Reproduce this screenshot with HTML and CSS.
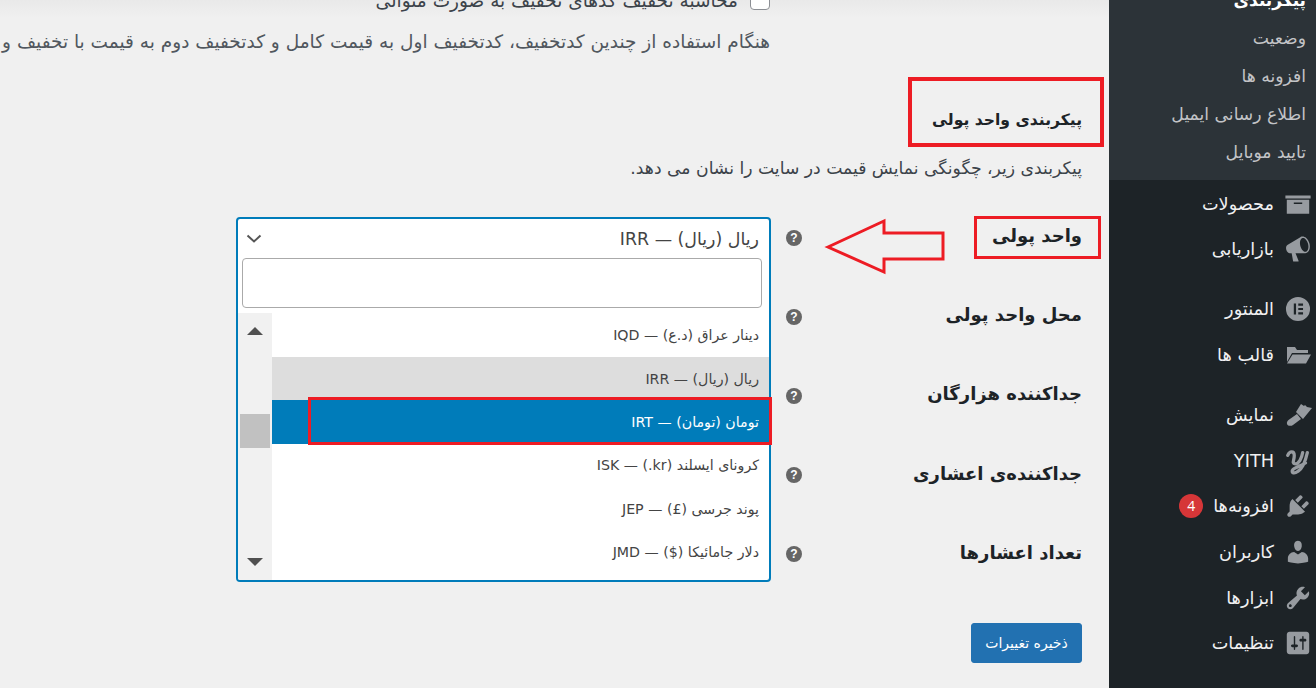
FILE: index.html
```html
<!DOCTYPE html>
<html lang="fa">
<head>
<meta charset="utf-8">
<title>پیکربندی</title>
<link rel="stylesheet" href="styles.css">
</head>
<body>
<div class="page">
  <main class="main" dir="rtl">
    <label class="check-row"><span class="checkbox"></span><span>محاسبه تخفیف کدهای تخفیف به صورت متوالی</span></label>
    <p class="hint">هنگام استفاده از چندین کدتخفیف، کدتخفیف اول به قیمت کامل و کدتخفیف دوم به قیمت با تخفیف و</p>
    <h2 class="title">پیکربندی واحد پولی</h2>
    <p class="desc">پیکربندی زیر، چگونگی نمایش قیمت در سایت را نشان می دهد.</p>
    <div class="rows">
      <div class="row"><span class="label">واحد پولی</span><span class="help">?</span></div>
      <div class="row"><span class="label">محل واحد پولی</span><span class="help">?</span></div>
      <div class="row"><span class="label">جداکننده هزارگان</span><span class="help">?</span></div>
      <div class="row"><span class="label">جداکننده‌ی اعشاری</span><span class="help">?</span></div>
      <div class="row"><span class="label">تعداد اعشارها</span><span class="help">?</span></div>
    </div>
    <button class="save">ذخیره تغییرات</button>

    <div class="dropdown">
      <div class="current">
        <span>ریال (ریال) — IRR</span>
        <svg class="chev" viewBox="0 0 16 9"><polyline points="1.5,1.5 8,7.5 14.5,1.5"/></svg>
      </div>
      <div class="search"></div>
      <div class="list">
        <ul class="options">
          <li>دینار عراق (د.ع) — IQD</li>
          <li class="muted">ریال (ریال) — IRR</li>
          <li class="active">تومان (تومان) — IRT</li>
          <li>کرونای ایسلند (kr.) — ISK</li>
          <li>پوند جرسی (£) — JEP</li>
          <li>دلار جامائیکا ($) — JMD</li>
        </ul>
        <div class="scrollbar">
          <span class="arrow-up"></span>
          <span class="thumb"></span>
          <span class="arrow-down"></span>
        </div>
      </div>
    </div>

    <span class="mark mark-title"></span>
    <span class="mark mark-label"></span>
    <span class="mark mark-option"></span>
    <svg class="pointer" viewBox="0 0 120 56"><polygon points="2,28 58,2 58,14 117,14 117,40 58,40 58,53"/></svg>
  </main>

  <aside class="side" dir="rtl">
    <ul class="submenu">
      <li class="sub-head">پیکربندی</li>
      <li>وضعیت</li>
      <li>افزونه ها</li>
      <li>اطلاع رسانی ایمیل</li>
      <li>تایید موبایل</li>
    </ul>
    <ul class="menu">
      <li><svg class="ico" viewBox="0 0 20 20"><path d="M19 4v2H1V4h18zM2 7h16v10H2V7zm11 3V9H7v1h6z" fill-rule="evenodd"/></svg><span>محصولات</span></li>
      <li><svg class="ico" viewBox="0 0 20 20"><path d="M18.15 5.94c.46 1.62.38 3.22-.02 4.48-.42 1.28-1.26 2.18-2.3 2.48-.16.06-.26.06-.4.06-.06.02-.12.02-.18.02-.06.02-.14.02-.22.02h-6.8l2.22 5.5c.02.14-.06.26-.14.34-.08.1-.24.16-.34.16H6.95c-.1 0-.26-.06-.34-.16-.08-.08-.16-.2-.14-.34l-1-5.5H4.25l-.02-.02c-.5.06-1.08-.18-1.54-.62s-.88-1.08-1.06-1.88c-.24-.8-.2-1.56-.02-2.2.18-.62.58-1.08 1.06-1.3l.02-.02 9-5.4c.1-.06.18-.1.24-.16.06-.04.14-.08.24-.12.16-.08.28-.12.44-.18 1.04-.3 2.24.1 3.22.98.98.86 1.84 2.24 2.3 3.86zm-2.58 5.98h-.02c.4-.1.74-.34 1.04-.7.58-.7.86-1.76.86-3.04-.02-.64-.1-1.3-.28-1.98-.34-1.36-1.02-2.5-1.78-3.24-.38-.38-.76-.64-1.18-.78-.18-.06-.38-.08-.56-.08-.12 0-.24.02-.36.04-.4.1-.74.34-1.04.7-.58.7-.86 1.76-.86 3.04.02.64.1 1.3.28 1.98.34 1.36 1.02 2.5 1.78 3.24.38.38.76.64 1.18.78.18.06.38.08.56.08.12 0 .24-.02.38-.04z"/></svg><span>بازاریابی</span></li>
      <li class="gap"><svg class="ico" viewBox="0 0 20 20"><path fill-rule="evenodd" d="M10 1.4a8.6 8.6 0 1 1 0 17.2a8.6 8.6 0 0 1 0-17.2zM7 6v8h1.6V6zM10.2 6v1.6h3.4V6zM10.2 9.2v1.6h3.4V9.2zM10.2 12.4V14h3.4v-1.6z"/></svg><span>المنتور</span></li>
      <li><svg class="ico" viewBox="0 0 28 28"><path d="M3 6h8l2 3h11v3H8l-5 9zM8.5 13.5H27l-5 9H3z"/></svg><span>قالب ها</span></li>
      <li class="gap"><svg class="ico" viewBox="0 0 28 28"><path d="M12 11L17 3l3 2 1-1 2 2 5 1-9 11zM13 13l4 5-8 6c-2 1.500-5.500 1-6-1s.5-3 1.500-4z"/></svg><span>نمایش</span></li>
      <li><svg class="ico ico-y" viewBox="0 0 28 30"><path d="M3 9C5 4 10 4 10 9c0 5-3 9 1 9 4 0 7-6 8-12M24 6c-2 9-5 17-10 20-4 3-7 2-6-1 2-3 8-4 14-8"/></svg><span>YITH</span></li>
      <li><svg class="ico" viewBox="0 0 20 20"><path d="M13.11 4.36L9.87 7.6 8 5.73l3.24-3.24c.35-.34 1.05-.2 1.56.32.52.51.66 1.21.31 1.55zm-8 1.77l.91-1.12 9.01 9.01-1.19.84c-.71.71-2.63 1.16-3.82 1.16H6.14L4.9 17.26c-.59.59-1.54.59-2.12 0-.59-.58-.59-1.53 0-2.12l1.24-1.24v-3.88c0-1.13.4-3.19 1.09-3.89zm7.26 3.97l3.24-3.24c.34-.35 1.04-.21 1.55.31.52.51.66 1.21.31 1.55l-3.24 3.25z"/></svg><span>افزونه‌ها</span><b class="badge">4</b></li>
      <li><svg class="ico" viewBox="0 0 20 20"><path d="M10 9.25c-2.27 0-2.73-3.44-2.73-3.44C7 4.02 7.82 2 9.97 2c2.16 0 2.98 2.02 2.71 3.81 0 0-.41 3.44-2.68 3.44zm0 2.57L12.72 10c2.39 0 4.52 2.33 4.52 4.53v2.49s-3.65 1.13-7.24 1.13c-3.65 0-7.24-1.13-7.24-1.13v-2.49c0-2.25 1.94-4.48 4.47-4.48z"/></svg><span>کاربران</span></li>
      <li><svg class="ico" viewBox="0 0 20 20"><path fill-rule="evenodd" d="M16.68 9.77c-1.34 1.34-3.3 1.67-4.95.99l-5.41 6.52c-.99.99-2.59.99-3.58 0s-.99-2.59 0-3.57l6.52-5.42c-.68-1.65-.35-3.61.99-4.95 1.28-1.28 3.12-1.62 4.72-1.06l-2.89 2.89 2.82 2.82 2.86-2.87c.53 1.58.18 3.39-1.08 4.65zM3.81 16.21c.4.39 1.04.39 1.43 0 .4-.4.4-1.04 0-1.43-.39-.4-1.03-.4-1.43 0-.39.39-.39 1.03 0 1.43z"/></svg><span>ابزارها</span></li>
      <li><svg class="ico" viewBox="0 0 20 20"><path fill-rule="evenodd" d="M18 16V4c0-1.100-.9-2-2-2H4c-1.100 0-2 .9-2 2v12c0 1.100.9 2 2 2h12c1.100 0 2-.9 2-2zM8 11h1c.55 0 1 .45 1 1s-.45 1-1 1H8v1.500c0 .28-.22.5-.5.5s-.5-.22-.5-.5V13H6c-.55 0-1-.45-1-1s.45-1 1-1h1V5.500c0-.28.22-.5.5-.5s.5.22.5.5V11zm5-2h-1c-.55 0-1-.45-1-1s.45-1 1-1h1V5.500c0-.28.22-.5.5-.5s.5.22.5.5V7h1c.55 0 1 .45 1 1s-.45 1-1 1h-1v5.500c0 .28-.22.5-.5.5s-.5-.22-.5-.5V9z"/></svg><span>تنظیمات</span></li>
    </ul>
  </aside>
</div>
</body>
</html>
```
FILE: styles.css
```css
* { box-sizing: border-box; }
html, body { margin: 0; height: 688px; overflow: hidden; }
body { font-family: "DejaVu Sans", "Noto Sans", sans-serif; background: #f0f0f1; }
ul { list-style: none; margin: 0; padding: 0; }
p, h2 { margin: 0; }

.page { display: flex; width: 1316px; height: 688px; direction: ltr; overflow: hidden; }

.main {
  position: relative;
  flex: 0 0 1109px;
  height: 688px;
  overflow: hidden;
  padding-right: 27px;
  background: linear-gradient(#e9e9e9, #f0f0f0 18px);
  color: #50575e;
}

.check-row {
  display: flex;
  align-items: center;
  gap: 12px;
  height: 20px;
  margin-top: -10px;
  padding-right: 312px;
  font-size: 18.5px;
  color: #3c434a;
  white-space: nowrap;
}
.checkbox {
  flex: none;
  width: 20px;
  height: 20px;
  background: #fff;
  border: 1px solid #8c8f94;
  border-radius: 4px;
}

.hint {
  margin-top: 20px;
  padding-right: 312px;
  height: 24px;
  line-height: 24px;
  font-size: 18.5px;
  white-space: nowrap;
}

.title {
  margin-top: 54px;
  height: 24px;
  line-height: 24px;
  font-size: 15.6px;
  font-weight: 700;
  color: #1d2327;
}
.desc {
  margin-top: 24px;
  height: 24px;
  line-height: 24px;
  font-size: 17.2px;
  color: #3c434a;
}

.rows { margin-top: 17px; }
.row { display: flex; align-items: center; height: 79.2px; }
.label {
  flex: 0 0 280px;
  padding-bottom: 2px;
  font-size: 18px;
  font-weight: 600;
  color: #1d2327;
  white-space: nowrap;
}
.help {
  width: 16px;
  height: 16px;
  margin-top: 2px;
  border-radius: 50%;
  background: #666;
  color: #fff;
  font: 700 12px/16px "Liberation Sans", sans-serif;
  text-align: center;
}

.save {
  display: block;
  width: 111px;
  height: 40px;
  margin-top: 30px;
  padding: 0;
  background: #2271b1;
  border: 1px solid #2271b1;
  border-radius: 3px;
  color: #fff;
  font-family: inherit;
  font-size: 14px;
}

.dropdown {
  position: absolute;
  left: 236px;
  top: 217px;
  width: 535px;
  height: 365px;
  background: #fff;
  border: 2px solid #007cba;
  border-radius: 4px;
  color: #444;
}
.current {
  display: flex;
  align-items: center;
  justify-content: space-between;
  height: 39px;
  padding: 0 10px 0 6px;
  font-size: 17.4px;
}
.chev { flex: none; width: 16px; height: 9px; margin-left: 2px; }
.chev polyline { fill: none; stroke: #555; stroke-width: 2; }
.search {
  height: 50px;
  margin: 0 7px 5px 4px;
  border: 1px solid #aaa;
  border-radius: 4px;
}
.list { display: flex; height: 267px; }
.options { flex: 1; padding-top: .6px; font-size: 14.2px; }
.options li {
  display: flex;
  align-items: center;
  height: 43.4px;
  padding-right: 10px;
  color: #444;
  white-space: nowrap;
}
.options .muted { background: #ddd; }
.options .active { background: #007cba; color: #fff; }

.scrollbar {
  position: relative;
  flex: 0 0 34px;
  background: #f1f1f1;
  border-bottom-left-radius: 2px;
}
.arrow-up, .arrow-down, .thumb { position: absolute; left: 9px; }
.arrow-up { top: 14px; border: 8px solid transparent; border-top: 0; border-bottom: 8px solid #505050; }
.arrow-down { bottom: 14px; border: 8px solid transparent; border-bottom: 0; border-top: 8px solid #505050; }
.thumb { left: 2px; top: 101px; width: 30px; height: 34px; background: #c1c1c1; }

.mark { position: absolute; border: 3px solid #ed1c24; pointer-events: none; }
.mark-title { left: 908px; top: 77px; width: 196px; height: 70px; border-width: 4px; }
.mark-label { left: 974px; top: 216px; width: 127px; height: 43px; }
.mark-option { left: 308px; top: 397px; width: 464px; height: 48px; }
.pointer { position: absolute; left: 826px; top: 219px; width: 120px; height: 56px; overflow: visible; }
.pointer polygon { fill: none; stroke: #ed1c24; stroke-width: 3; }

.side {
  flex: 0 0 207px;
  height: 688px;
  overflow: hidden;
  background: #1d2327;
  color: #f0f0f1;
}
.submenu {
  margin-top: -19px;
  padding: 0 0 9px;
  background: #2c3338;
  color: #c3c4c7;
  font-size: 17.2px;
}
.submenu li {
  display: flex;
  align-items: center;
  height: 38px;
  padding-right: 10px;
  white-space: nowrap;
}
.submenu .sub-head { color: #fff; font-weight: 700; font-size: 17px; }

.menu { padding-top: 1px; font-size: 17.7px; }
.menu li {
  display: flex;
  align-items: center;
  gap: 10px;
  height: 45.6px;
  padding-right: 4px;
  white-space: nowrap;
}
.menu .gap { margin-top: 14.5px; }
.ico { flex: none; width: 28px; height: 28px; fill: #979ba0; }
.ico-y { fill: none; stroke: #979ba0; stroke-width: 3.500; stroke-linecap: round; }
.badge {
  display: block;
  width: 24px;
  height: 24px;
  border-radius: 50%;
  background: #d63638;
  color: #fff;
  font: 400 14px/24px "Open Sans", sans-serif;
  text-align: center;
}
```
